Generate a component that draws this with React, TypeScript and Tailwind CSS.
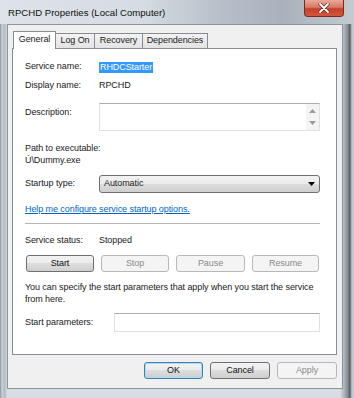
import React from "react";

function Btn({ label, kind = "normal", w }: { label: string; kind?: "normal" | "disabled" | "default"; w: string }) {
  const base = "h-[17px] rounded-[3px] border flex items-center justify-center leading-none";
  const cls =
    kind === "disabled"
      ? "border-[#b5b9bc] bg-[#f4f4f4] text-[#8a8a8a]"
      : kind === "default"
      ? "border-[#3c7fb1] bg-[linear-gradient(#f2f2f2_0%,#ebebeb_50%,#dddddd_50%,#cfcfcf_100%)] shadow-[inset_0_0_0_1px_#a8dcf6] text-[#111]"
      : "border-[#707070] bg-[linear-gradient(#f2f2f2_0%,#ebebeb_50%,#dddddd_50%,#cfcfcf_100%)] text-[#111]";
  return <div className={`${base} ${cls} ${w}`}>{label}</div>;
}

function Tab({ label, selected, w }: { label: string; selected?: boolean; w: string }) {
  if (selected) {
    return (
      <div className={`${w} h-[18px] -mb-[1px] relative z-10 bg-white border border-b-0 border-[#898c95] flex items-center justify-center pb-[2px]`}>
        {label}
      </div>
    );
  }
  return (
    <div className={`${w} h-[15px] bg-[linear-gradient(#f3f3f3,#e3e3e3)] border border-l-0 border-b-0 border-[#898c95] flex items-center justify-center`}>
      {label}
    </div>
  );
}

export default function App() {
  return (
    <div className="w-[354px] h-[398px] flex flex-col overflow-hidden font-['Liberation_Sans',Arial,sans-serif] text-[9px] tracking-[-0.08px] text-[#1a1a1a] bg-[linear-gradient(90deg,#8d949b_0px,#c9d0d6_2px,#b3bac1_5px,#d7dde2_7px,#d7dde2_340px,#b9c0c7_343px,#8f969c_347px,#5a6066_350px,#c2c8cd_352px)]">
      {/* title bar */}
      <div className="h-[24px] flex items-start shrink-0 bg-[linear-gradient(90deg,#dde3e8_0%,#d5dce2_40%,#b7c0c9_62%,#a9b2bc_80%,#c3cad1_100%)]">
        <div className="pl-[8px] pt-[6px] text-[9.6px] tracking-normal leading-[14px] text-[#111]">RPCHD Properties (Local Computer)</div>
        <div className="ml-auto mr-[10px] w-[40px] h-[17px] rounded-b-[4px] border border-t-0 border-[#7a2b1e] bg-[linear-gradient(#e9a99a_0%,#d87a64_45%,#c4402a_55%,#d3573c_100%)] flex items-center justify-center">
          <svg width="12" height="10" viewBox="0 0 12 10">
            <path d="M2 1 L10 9 M10 1 L2 9" stroke="#5a2a22" strokeWidth="3.2" strokeLinecap="round" />
            <path d="M2 1 L10 9 M10 1 L2 9" stroke="#ffffff" strokeWidth="1.8" strokeLinecap="round" />
          </svg>
        </div>
      </div>

      {/* client area */}
      <div className="ml-[7px] mr-[11px] mb-[9px] flex-1 border border-[#8c949c] bg-[#f0f0f0] flex flex-col px-[4px] pt-[6px]">
        {/* tabs */}
        <div className="flex items-end h-[17px] pl-[1px]">
          <Tab label="General" selected w="w-[43px]" />
          <Tab label="Log On" w="w-[39px]" />
          <Tab label="Recovery" w="w-[48px]" />
          <Tab label="Dependencies" w="w-[65px]" />
        </div>

        {/* panel */}
        <div className="w-[325px] h-[307px] bg-white border border-[#898c95] flex flex-col pl-[12px] pr-[16px] pt-[11px]">
          <div className="flex items-center h-[14px]">
            <div className="w-[74px]">Service name:</div>
            <span className="bg-[#3399ff] text-white px-[1px] leading-[11px]">RHDCStarter</span>
          </div>
          <div className="flex items-center h-[14px] mt-[5px]">
            <div className="w-[74px]">Display name:</div>
            <div>RPCHD</div>
          </div>
          <div className="flex items-start h-[28px] mt-[10px]">
            <div className="w-[74px] pt-[3px] leading-[12px]">Description:</div>
            <div className="flex-1 h-[28px] border border-[#dde2e8] border-t-[#abadb3] flex justify-end">
              <div className="w-[13px] h-full bg-[#f4f4f4] flex flex-col items-center justify-between py-[5px]">
                <svg width="7" height="4" viewBox="0 0 7 4"><path d="M0 4 L3.5 0 L7 4 Z" fill="#9a9a9a" /></svg>
                <svg width="7" height="4" viewBox="0 0 7 4"><path d="M0 0 L3.5 4 L7 0 Z" fill="#9a9a9a" /></svg>
              </div>
            </div>
          </div>
          <div className="mt-[11px] leading-[12px]">Path to executable:</div>
          <div className="leading-[12px]">Ú\Dummy.exe</div>
          <div className="flex items-center h-[18px] mt-[9px]">
            <div className="w-[74px]">Startup type:</div>
            <div className="flex-1 h-[18px] rounded-[3px] border border-[#707070] bg-[linear-gradient(#f2f2f2_0%,#ebebeb_50%,#dddddd_50%,#cfcfcf_100%)] flex items-center pl-[4px] pr-[4px]">
              <span>Automatic</span>
              <svg className="ml-auto" width="7" height="4" viewBox="0 0 7 4"><path d="M0 0 L3.5 4 L7 0 Z" fill="#000" /></svg>
            </div>
          </div>
          <div className="mt-[10px] h-[14px] flex items-center">
            <span className="text-[#0066cc] underline">Help me configure service startup options.</span>
          </div>
          <div className="mt-[6px] h-px bg-[#b5b5b5]" />
          <div className="flex items-center h-[14px] mt-[10px]">
            <div className="w-[74px]">Service status:</div>
            <div>Stopped</div>
          </div>
          <div className="flex items-center mt-[7px] gap-[7px] pl-[1px]">
            <Btn label="Start" w="w-[68px]" />
            <Btn label="Stop" kind="disabled" w="w-[68px]" />
            <Btn label="Pause" kind="disabled" w="w-[69px]" />
            <Btn label="Resume" kind="disabled" w="w-[67px]" />
          </div>
          <div className="mt-[9px] leading-[12px]">
            You can specify the start parameters that apply when you start the service<br />from here.
          </div>
          <div className="flex items-center h-[19px] mt-[8px]">
            <div className="w-[89px]">Start parameters:</div>
            <div className="flex-1 h-[19px] border border-[#dde2e8] border-t-[#abadb3]" />
          </div>
        </div>

        {/* bottom buttons */}
        <div className="flex justify-end gap-[7px] mt-[7px] pr-[1px]">
          <Btn label="OK" kind="default" w="w-[59px]" />
          <Btn label="Cancel" w="w-[60px]" />
          <Btn label="Apply" kind="disabled" w="w-[60px]" />
        </div>
      </div>
    </div>
  );
}
